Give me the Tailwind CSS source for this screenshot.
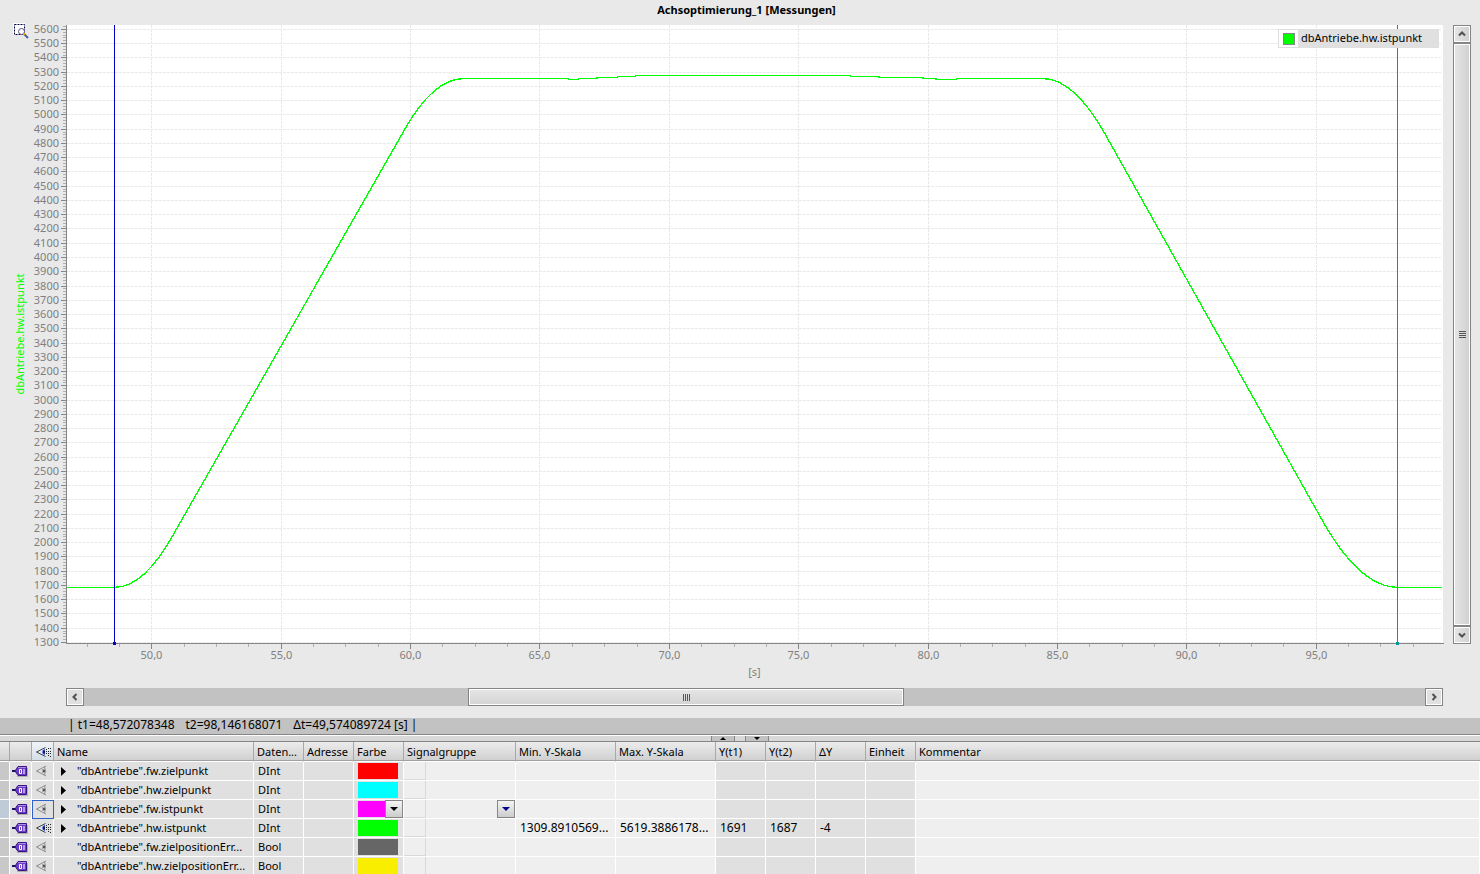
<!DOCTYPE html>
<html lang="de">
<head>
  <meta charset="UTF-8" />
  <meta name="viewport" content="width=device-width, initial-scale=1.0"/>
  <title>Achsoptimierung_1 [Messungen]</title>
  <script src="https://cdn.jsdelivr.net/npm/@tailwindcss/browser@4"></script>
</head>
<body class="h-screen overflow-hidden flex flex-col bg-[#e9e9e9] text-black text-[11px] leading-4 font-['Noto_Sans',sans-serif]">

  <!-- Shared icons -->
  <svg class="hidden">
    <symbol id="tag" viewBox="0 0 16 12">
      <path d="M5 11.500h10.500V3" fill="none" stroke="#b0b0b0"/>
      <path d="M0 6h4" stroke="#1c1060" stroke-width="2"/>
      <path d="M3 6L6 1.500h8.500v9H6z" fill="#6a3cc8" stroke="#3a1484"/>
      <path d="M6 2.500h8" stroke="#a88ce8"/>
      <path d="M7.500 4.500h2v4h-2zM12 4v5" fill="none" stroke="#fff"/>
    </symbol>
    <symbol id="eye" viewBox="0 0 16 12">
      <path d="M11 1L1.500 6l9.500 5M9.500 2q2 4 0 8" fill="none" stroke="#8c8c8c"/>
      <path d="M7 4h3v4H7z" fill="#a8a8a8"/>
      <path d="M8 5h2v2H8z" fill="#555"/>
    </symbol>
    <symbol id="eye-on" viewBox="0 0 16 12">
      <path d="M10.500 1.500L1.500 6l9 4.500" fill="none" stroke="#444"/>
      <path d="M10 2.500q-6 3.500 0 7z" fill="#4a6cf0"/>
      <path d="M8 4.500h2v3H8z" fill="#1c1c40"/>
      <path d="M11 3h1v1h-1zM13 2h1v1h-1zM15 2h1v1h-1zM11 5h1v1h-1zM13 5h1v1h-1zM15 5h1v1h-1zM11 7h1v1h-1zM13 7h1v1h-1zM15 7h1v1h-1zM13 9h1v1h-1zM15 10h1v1h-1z" fill="#222"/>
    </symbol>
    <symbol id="expand" viewBox="0 0 5 9"><path d="M0 0l5 4.500L0 9z"/></symbol>
    <symbol id="down" viewBox="0 0 8 4"><path d="M0 0h8L4 4z" fill="currentColor"/></symbol>
    <symbol id="chevron" viewBox="0 0 8 8"><path d="M1 5.500L4 2.500l3 3" fill="none" stroke="#505050" stroke-width="2"/></symbol>
  </svg>

  <h1 class="h-[25px] pt-[2px] pl-[13px] text-center font-bold shrink-0">Achsoptimierung_1 [Messungen]</h1>

  <main class="flex-1 min-h-0 flex pr-[9px]">
    <div class="relative flex-1 min-w-0">
      <svg id="plot" class="absolute inset-0 w-full h-full overflow-visible" role="img" aria-label="dbAntriebe.hw.istpunkt"></svg>
      <button class="absolute left-[13px] top-[-2px] w-4 h-4" aria-label="Zoom">
        <svg class="w-4 h-4" viewBox="0 0 16 16">
          <path d="M0 0h12v12H0z" fill="#fff"/>
          <path d="M1.500 1.500h10v10h-10z" fill="none" stroke="#000040" stroke-dasharray="2 1"/>
          <circle cx="8.500" cy="8.500" r="3" fill="#fff" stroke="#5a5080"/>
          <path d="M11 11l4 4" stroke="#416296" stroke-width="2"/>
          <path d="M10 10h2v2h-2z" fill="#e8a000"/>
        </svg>
      </button>
      <div class="absolute right-1 top-1 w-[161px] h-[19px] flex border border-[#dfdfdf] bg-white">
        <span class="ml-1 mr-[3px] w-3 h-3 self-center bg-[#00ff00] border border-[#858585]"></span>
        <span class="flex-1 bg-[#e0e0e0] pl-[3px]">dbAntriebe.hw.istpunkt</span>
      </div>
    </div>

    <!-- Vertical scrollbar -->
    <div class="ml-[10px] w-[18px] mb-[44px] flex flex-col">
      <button class="h-[18px] shrink-0 grid place-items-center border border-[#858585] bg-linear-to-r from-[#e6e6e6] to-[#d0d0d0] shadow-[inset_0_0_0_1px_#fff]" aria-label="Nach oben"><svg class="w-2 h-2"><use href="#chevron"/></svg></button>
      <div class="flex-1 grid place-items-center border border-[#858585] bg-linear-to-r from-[#e6e6e6] to-[#d0d0d0] shadow-[inset_0_0_0_1px_#fff]">
        <span class="w-[7px] h-[7px] bg-[repeating-linear-gradient(to_bottom,#555_0_1px,transparent_1px_2px)]"></span>
      </div>
      <button class="h-[18px] shrink-0 grid place-items-center border border-[#858585] bg-linear-to-r from-[#e6e6e6] to-[#d0d0d0] shadow-[inset_0_0_0_1px_#fff]" aria-label="Nach unten"><svg class="w-2 h-2 rotate-180"><use href="#chevron"/></svg></button>
    </div>
  </main>

  <!-- Horizontal scrollbar -->
  <div class="mb-3 ml-[66px] mr-[37px] h-[18px] shrink-0 flex bg-[#c2c2c2]">
    <button class="w-[18px] grid place-items-center border border-[#858585] bg-[#e0e0e0] shadow-[inset_0_0_0_1px_#fff]" aria-label="Nach links"><svg class="w-2 h-2 -rotate-90"><use href="#chevron"/></svg></button>
    <div class="flex-1 flex pl-[384px]">
      <div class="w-[436px] grid place-items-center border border-[#858585] bg-linear-to-b from-[#e6e6e6] to-[#d4d4d4] shadow-[inset_0_0_0_1px_#fff]">
        <span class="w-[7px] h-[7px] bg-[repeating-linear-gradient(to_right,#555_0_1px,transparent_1px_2px)]"></span>
      </div>
    </div>
    <button class="w-[18px] grid place-items-center border border-[#858585] bg-[#e0e0e0] shadow-[inset_0_0_0_1px_#fff]" aria-label="Nach rechts"><svg class="w-2 h-2 rotate-90"><use href="#chevron"/></svg></button>
  </div>

  <!-- Cursor readout -->
  <div class="h-4 shrink-0 pl-[68px] flex gap-[11px] whitespace-pre bg-[#c2c2c2] text-xs/[14px]">
    <span>| t1=48,572078348</span><span>t2=98,146168071</span><span>Δt=49,574089724 [s] |</span>
  </div>

  <!-- Splitter -->
  <div class="h-2 shrink-0 flex justify-center gap-[10px] border-y border-[#858585] bg-[#d8d8d8] shadow-[inset_0_1px_0_#fff]">
    <button class="w-6 mt-px grid place-items-center border-x border-[#858585] bg-[#c2c2c2]" aria-label="Diagramm ausblenden"><svg class="w-[6px] h-[3px] rotate-180"><use href="#down"/></svg></button>
    <button class="w-6 mt-px grid place-items-center border-x border-[#858585] bg-[#c2c2c2]" aria-label="Tabelle ausblenden"><svg class="w-[6px] h-[3px]"><use href="#down"/></svg></button>
  </div>

  <!-- Signal table -->
  <div class="shrink-0 -mb-[2px] overflow-hidden">
    <table class="w-full table-fixed border-separate border-spacing-0 whitespace-nowrap">
      <colgroup>
        <col class="w-[10px]"><col class="w-[22px]"><col class="w-[22px]"><col class="w-[200px]"><col class="w-[50px]">
        <col class="w-[50px]"><col class="w-[50px]"><col class="w-[112px]"><col class="w-[100px]"><col class="w-[100px]">
        <col class="w-[50px]"><col class="w-[50px]"><col class="w-[50px]"><col class="w-[50px]"><col>
      </colgroup>
      <thead>
        <tr class="h-5 text-left *:h-5 *:p-0 *:pl-[3px] *:font-normal *:overflow-hidden *:border-r *:last:border-r-0 *:border-r-[#a8a8a8] *:border-b *:border-b-white *:bg-linear-to-b *:from-[#ececec] *:to-[#cfcfcf] *:shadow-[inset_0_-1px_0_#a0a0a0]">
          <th></th><th></th>
          <th class="from-[#f0f4f8]! to-[#d3dce4]!"><svg class="w-4 h-3"><use href="#eye-on"/></svg></th>
          <th>Name</th><th>Daten...</th><th>Adresse</th><th>Farbe</th><th>Signalgruppe</th><th>Min. Y-Skala</th>
          <th>Max. Y-Skala</th><th>Y(t1)</th><th>Y(t2)</th><th>ΔY</th><th>Einheit</th><th>Kommentar</th>
        </tr>
      </thead>
      <tbody id="signals"></tbody>
    </table>
  </div>

  <script>
    const signals = [
      { name: '"dbAntriebe".fw.zielpunkt', type: "DInt", color: "#ff0000", expand: true },
      { name: '"dbAntriebe".hw.zielpunkt', type: "DInt", color: "#00ffff", expand: true },
      { name: '"dbAntriebe".fw.istpunkt', type: "DInt", color: "#ff00ff", expand: true, selected: true },
      { name: '"dbAntriebe".hw.istpunkt', type: "DInt", color: "#00ff00", expand: true, visible: true,
        min: "1309.8910569...", max: "5619.3886178...", y1: "1691", y2: "1687", dy: "-4" },
      { name: '"dbAntriebe".fw.zielpositionErr...', type: "Bool", color: "#666666" },
      { name: '"dbAntriebe".hw.zielpositionErr...', type: "Bool", color: "#faee00" },
    ];

    // Small square drop-down, only its arrow is shown
    function dropdown(label, tone) {
      return `<span class="absolute right-0 top-0 w-[18px] h-[18px] grid place-items-center ${tone}">
        <select aria-label="${label}" class="absolute inset-0 w-[18px] h-[18px] appearance-none border border-[#858585] bg-linear-to-b from-[#f4f4f4] to-[#cccccc] text-transparent"><option></option></select>
        <svg class="relative w-2 h-1 pointer-events-none"><use href="#down"/></svg></span>`;
    }

    document.getElementById("signals").innerHTML = signals.map(s => {
      const gray = "bg-[#e0e0e0]", light = "bg-[#efefef]";
      return `<tr class="*:h-[19px] *:p-0 *:border-r *:border-b *:border-white *:leading-[18px]">
        <td class="${s.selected ? "bg-[#bfcbd6]" : "bg-[#c8c8c8]"}"></td>
        <td class="${gray}"><svg class="ml-[2px] w-4 h-3"><use href="#tag"/></svg></td>
        <td class="${gray} ${s.selected ? "outline outline-[#3060c8] -outline-offset-1" : ""}">
          <button class="block ml-[3px]" aria-label="Anzeigen"><svg class="w-4 h-3"><use href="${s.visible ? "#eye-on" : "#eye"}"/></svg></button></td>
        <td class="${gray}"><div class="flex items-center pl-[7px]">
          <button class="w-4 ${s.expand ? "" : "invisible"}" aria-label="Aufklappen"><svg class="w-[5px] h-[9px]"><use href="#expand"/></svg></button>${s.name}</div></td>
        <td class="${gray}"><div class="pl-1">${s.type}</div></td>
        <td class="${gray}"></td>
        <td class="${gray}"><div class="relative h-[18px] py-px pl-1"><div class="w-10 h-4" style="background:${s.color}"></div>${s.selected ? dropdown("Farbe", "text-black") : ""}</div></td>
        <td class="${light}"><div class="relative h-[18px]"><div class="w-[22px] h-[18px] border-r border-b border-[#d9d9d9]"></div>${s.selected ? dropdown("Signalgruppe", "text-[#00008c]") : ""}</div></td>
        <td class="${light}"><div class="pl-1 text-xs/[18px]">${s.min || ""}</div></td>
        <td class="${light}"><div class="pl-1 text-xs/[18px]">${s.max || ""}</div></td>
        <td class="${gray}"><div class="pl-1 text-xs/[18px]">${s.y1 || ""}</div></td>
        <td class="${gray}"><div class="pl-1 text-xs/[18px]">${s.y2 || ""}</div></td>
        <td class="${gray}"><div class="pl-1 text-xs/[18px]">${s.dy || ""}</div></td>
        <td class="${gray}"></td>
        <td class="${light}"></td>
      </tr>`;
    }).join("");

    // Visible range of both axes
    const range = { t0: 46.7, t1: 99.92, v0: 1300, v1: 5634 };
    const cursors = [{ t: 48.572, color: "#0000c8" }, { t: 98.146, color: "#009a96" }];

    function drawPlot() {
      const svg = document.getElementById("plot");
      const { width, height } = svg.getBoundingClientRect();
      const left = 66, bottom = height - 45;
      const x = t => left + 0.5 + (t - range.t0) / (range.t1 - range.t0) * (width - left);
      const y = v => bottom - 0.5 - (v - range.v0) / (range.v1 - range.v0) * bottom;
      const px = n => Math.floor(n) + 0.5;
      let out = `<rect x="${left}" width="${width - left}" height="${bottom}" fill="#fff"/>`;
      let grid = "", major = "", minor = "", labels = "";

      for (let v = 1300; v <= 5620; v += 20) {
        const py = px(y(v));
        if (v % 100) { minor += `M63 ${py}H66`; continue; }
        if (v > 5600) continue;
        grid += `M67 ${py}H${width - 2}`;
        major += `M61 ${py}H66`;
        labels += `<text x="59" y="${py + 3.5}" text-anchor="end">${v}</text>`;
      }
      for (let t = 47.5; t < 99; t += 1.25) {
        const pos = px(x(t));
        if (t % 5) { minor += `M${pos} ${bottom + 1}v3`; continue; }
        grid += `M${pos} 0V${bottom}`;
        major += `M${pos} ${bottom + 1}v5`;
        labels += `<text x="${pos}" y="${bottom + 16}" text-anchor="middle">${t},0</text>`;
      }
      major += `M66.500 0V${bottom + 1}M66 ${bottom + 0.5}H${width + 1}`;

      // Ramp up, plateau with slow drift, ramp down
      const p = (t, v) => `${x(t)} ${y(v)}`;
      let curve = `M${p(46.7, 1687)}L${p(48.57, 1687)}Q${p(49.7, 1687)} ${p(50.85, 2063)}`
        + `L${p(59.77, 4898)}Q${p(60.89, 5255)} ${p(62.05, 5255)}`;
      [[66.1, 5248], [66.5, 5255], [67.2, 5262], [68, 5269], [68.7, 5276], [77, 5269], [78.1, 5262],
       [79.8, 5255], [80.3, 5248], [81.1, 5255]].forEach(([t, v]) => {
        curve += `H${x(t)}V${y(v)}`;
      });
      curve += `L${p(84.43, 5255)}Q${p(85.63, 5255)} ${p(86.84, 4866)}L${p(95.23, 2158)}`
        + `Q${p(96.69, 1687)} ${p(98.15, 1687)}H${width - 1}`;

      out += `<g fill="none" shape-rendering="crispEdges">
        <path d="${grid}" stroke="#e9e9e9" stroke-dasharray="3 1"/>
        <path d="${minor}" stroke="#b0b0b0"/><path d="${major}" stroke="#858585"/>
        <path d="${curve}" stroke="#00ff00" stroke-width="1.35"/></g>`;
      cursors.forEach(c => {
        const pos = Math.floor(x(c.t));
        out += `<path d="M${pos} 0h1v${bottom}h-1zM${pos - 1} ${bottom - 1}h3v3h-3z" fill="${c.color}"/>`;
      });
      out += `<g fill="#808080">${labels}<text x="${left + (width - left) / 2}" y="${bottom + 33}" text-anchor="middle">[s]</text></g>
        <text transform="translate(24 ${bottom / 2}) rotate(-90)" text-anchor="middle" fill="#00ff00">dbAntriebe.hw.istpunkt</text>`;
      svg.innerHTML = out;
    }

    // Redraws whenever the plot area changes size
    new ResizeObserver(drawPlot).observe(document.getElementById("plot").parentElement);
  </script>
</body>
</html>
